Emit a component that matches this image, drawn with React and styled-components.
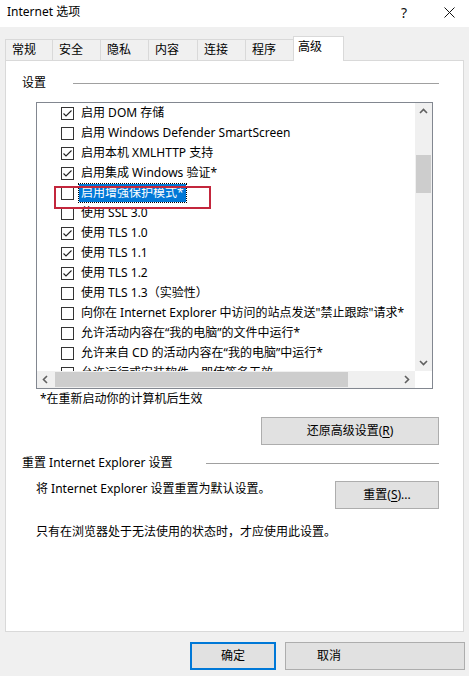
import React from 'react';
import styled, { createGlobalStyle } from 'styled-components';

const Global = createGlobalStyle`
  html, body { margin: 0; padding: 0; background: #f0f0f0; }
  body {
    font-family: "Noto Sans", "Noto Sans CJK SC", sans-serif;
    font-size: 12px;
    color: #000;
  }
  * { box-sizing: border-box; }
`;

const Window = styled.div`
  width: 469px;
  height: 676px;
  display: flex;
  flex-direction: column;
  background: #f0f0f0;
  overflow: hidden;
`;

const TitleBar = styled.div`
  height: 27px;
  background: #fff;
  display: flex;
  align-items: center;
  padding: 0 10px 3px 7px;
`;

const Title = styled.span`
  font-size: 12px;
  line-height: 16px;
`;

const TitleControls = styled.div`
  margin-left: auto;
  display: flex;
  align-items: center;
  gap: 25px;
`;

const TitleButton = styled.div`
  width: 20px;
  height: 20px;
  display: flex;
  align-items: center;
  justify-content: center;
  font-size: 14px;
  color: #111;
`;

const TabStrip = styled.div`
  height: 33px;
  display: flex;
  align-items: flex-end;
  padding-left: 5px;
  position: relative;
  z-index: 2;
`;

const Tab = styled.div`
  width: ${p => p.$w}px;
  height: ${p => (p.$active ? 25 : 21)}px;
  margin-left: ${p => (p.$first ? 0 : -1)}px;
  margin-bottom: ${p => (p.$active ? -1 : 0)}px;
  border: 1px solid #d9d9d9;
  border-bottom: none;
  background: ${p => (p.$active ? '#fff' : '#f0f0f0')};
  display: flex;
  align-items: center;
  padding-left: ${p => (p.$active ? 4 : 6)}px;
  padding-bottom: ${p => (p.$active ? 4 : 0)}px;
  font-size: 12px;
  line-height: 16px;
  position: relative;
  z-index: ${p => (p.$active ? 2 : 1)};
`;

const Panel = styled.div`
  margin: 0 5px;
  height: 572px;
  background: #fff;
  border: 1px solid #d9d9d9;
  display: flex;
  flex-direction: column;
  position: relative;
  z-index: 1;
`;

const GroupHeader = styled.div`
  display: flex;
  align-items: center;
  height: 16px;
  margin-top: ${p => p.$top}px;
  padding: 0 24px 0 16px;
`;

const GroupLabel = styled.span`
  font-size: 12px;
  line-height: 16px;
  white-space: nowrap;
`;

const GroupLine = styled.div`
  flex: 1;
  height: 1px;
  background: #a0a0a0;
  margin-left: ${p => p.$gap}px;
`;

const ListBox = styled.div`
  position: relative;
  margin: 11px 0 0 30px;
  width: 397px;
  height: 287px;
  border: 1px solid #828790;
  display: grid;
  grid-template-columns: 1fr 17px;
  grid-template-rows: 1fr 17px;
`;

const Rows = styled.div`
  overflow: hidden;
  padding-left: 24px;
  background: #fff;
`;

const Row = styled.div`
  height: 20px;
  display: flex;
  align-items: center;
  gap: ${p => (p.$selected ? 5 : 7)}px;
  white-space: nowrap;
`;

const RowLabel = styled.span`
  font-size: 12px;
  line-height: 16px;
  padding: ${p => (p.$selected ? '1px 2px' : '0')};
  background: ${p => (p.$selected ? '#0078d7' : 'transparent')};
  color: ${p => (p.$selected ? '#fff' : '#000')};
  outline: ${p => (p.$selected ? '1px dotted #000' : 'none')};
`;

const Box = styled.svg`
  flex: none;
  display: block;
`;

const Highlight = styled.div`
  position: absolute;
  left: 17px;
  top: 83px;
  width: 157px;
  height: 23px;
  border: 2px solid #c3263c;
  pointer-events: none;
`;

const VScroll = styled.div`
  background: #f0f0f0;
  display: flex;
  flex-direction: column;
`;

const HScroll = styled.div`
  background: #f0f0f0;
  display: flex;
`;

const Corner = styled.div`
  background: #fff;
`;

const ArrowBox = styled.div`
  width: 17px;
  height: 17px;
  flex: none;
  display: flex;
  align-items: center;
  justify-content: center;
`;

const VTrack = styled.div`
  flex: 1;
  position: relative;
`;

const VThumb = styled.div`
  position: absolute;
  left: 1px;
  right: 1px;
  top: 35px;
  height: 38px;
  background: #cdcdcd;
`;

const HTrack = styled.div`
  flex: 1;
  position: relative;
`;

const HThumb = styled.div`
  position: absolute;
  top: 1px;
  bottom: 1px;
  left: 1px;
  width: 293px;
  background: #cdcdcd;
`;

const Note = styled.div`
  margin: 2px 0 0 34px;
  font-size: 12px;
  line-height: 16px;
`;

const Button = styled.div`
  width: ${p => p.$w}px;
  height: 28px;
  background: #e1e1e1;
  border: ${p => (p.$default ? '2px solid #0078d7' : '1px solid #adadad')};
  display: flex;
  align-items: center;
  justify-content: ${p => (p.$left ? 'flex-start' : 'center')};
  padding-left: ${p => p.$pl || 0}px;
  font-size: 12px;
  line-height: 16px;
  flex: none;
`;

const RestoreWrap = styled.div`
  margin-top: 10px;
  align-self: flex-end;
  margin-right: 24px;
`;

const ResetRow = styled.div`
  margin-top: 10px;
  padding: 0 24px 0 30px;
  display: flex;
  justify-content: space-between;
  align-items: flex-start;
`;

const BodyText = styled.div`
  font-size: 12px;
  line-height: 16px;
  margin-top: ${p => p.$top || 0}px;
  padding-left: ${p => p.$pl || 0}px;
`;

const Footer = styled.div`
  display: flex;
  justify-content: flex-end;
  gap: 9px;
  padding: 10px 4px 0 0;
`;

const U = styled.span`
  text-decoration: underline;
  text-underline-offset: 2px;
`;

const Checkbox = ({ checked }) => (
  <Box width="13" height="13" viewBox="0 0 13 13">
    <rect x="0.5" y="0.5" width="12" height="12" fill="#fff" stroke="#333" />
    {checked && (
      <polyline points="2.5,6.5 5,9 10.5,3.5" fill="none" stroke="#222" strokeWidth="1.1" />
    )}
  </Box>
);

const Arrow = ({ dir }) => {
  const pts = {
    up: '5,10 8.5,6.5 12,10',
    down: '5,7 8.5,10.5 12,7',
    left: '10,5 6.5,8.5 10,12',
    right: '7,5 10.5,8.5 7,12',
  }[dir];
  return (
    <ArrowBox>
      <svg width="17" height="17" viewBox="0 0 17 17">
        <polyline points={pts} fill="none" stroke="#606060" strokeWidth="1.6" />
      </svg>
    </ArrowBox>
  );
};

const tabs = [
  { t: '常规', w: 48 },
  { t: '安全', w: 49 },
  { t: '隐私', w: 49 },
  { t: '内容', w: 50 },
  { t: '连接', w: 49 },
  { t: '程序', w: 49 },
  { t: '高级', w: 51, active: true },
];

const items = [
  { c: true, t: '启用 DOM 存储' },
  { c: false, t: '启用 Windows Defender SmartScreen' },
  { c: true, t: '启用本机 XMLHTTP 支持' },
  { c: true, t: '启用集成 Windows 验证*' },
  { c: false, t: '启用增强保护模式*', sel: true },
  { c: false, t: '使用 SSL 3.0' },
  { c: true, t: '使用 TLS 1.0' },
  { c: true, t: '使用 TLS 1.1' },
  { c: true, t: '使用 TLS 1.2' },
  { c: false, t: '使用 TLS 1.3（实验性）' },
  { c: false, t: '向你在 Internet Explorer 中访问的站点发送"禁止跟踪"请求*' },
  { c: false, t: '允许活动内容在“我的电脑”的文件中运行*' },
  { c: false, t: '允许来自 CD 的活动内容在“我的电脑”中运行*' },
  { c: false, t: '允许运行或安装软件，即使签名无效' },
];

export default function App() {
  return (
    <>
      <Global />
      <Window>
        <TitleBar>
          <Title>Internet 选项</Title>
          <TitleControls>
            <TitleButton>?</TitleButton>
            <TitleButton>
              <svg width="11" height="11" viewBox="0 0 11 11">
                <path d="M0.5 0.5 L10.5 10.5 M10.5 0.5 L0.5 10.5" stroke="#111" strokeWidth="1" />
              </svg>
            </TitleButton>
          </TitleControls>
        </TitleBar>
        <TabStrip>
          {tabs.map((tb, i) => (
            <Tab key={tb.t} $w={tb.w} $active={tb.active} $first={i === 0}>
              {tb.t}
            </Tab>
          ))}
        </TabStrip>
        <Panel>
          <GroupHeader $top={14}>
            <GroupLabel>设置</GroupLabel>
            <GroupLine $gap={27} />
          </GroupHeader>
          <ListBox>
            <Rows>
              {items.map(it => (
                <Row key={it.t} $selected={it.sel}>
                  <Checkbox checked={it.c} />
                  <RowLabel $selected={it.sel}>{it.t}</RowLabel>
                </Row>
              ))}
            </Rows>
            <VScroll>
              <Arrow dir="up" />
              <VTrack>
                <VThumb />
              </VTrack>
              <Arrow dir="down" />
            </VScroll>
            <HScroll>
              <Arrow dir="left" />
              <HTrack>
                <HThumb />
              </HTrack>
              <Arrow dir="right" />
            </HScroll>
            <Corner />
            <Highlight />
          </ListBox>
          <Note>*在重新启动你的计算机后生效</Note>
          <RestoreWrap>
            <Button $w={178}>
              还原高级设置(<U>R</U>)
            </Button>
          </RestoreWrap>
          <GroupHeader $top={10}>
            <GroupLabel>重置 Internet Explorer 设置</GroupLabel>
            <GroupLine $gap={33} />
          </GroupHeader>
          <ResetRow>
            <BodyText>将 Internet Explorer 设置重置为默认设置。</BodyText>
            <Button $w={104}>
              重置(<U>S</U>)...
            </Button>
          </ResetRow>
          <BodyText $top={15} $pl={30}>
            只有在浏览器处于无法使用的状态时，才应使用此设置。
          </BodyText>
        </Panel>
        <Footer>
          <Button $w={86} $default>确定</Button>
          <Button $w={180} $left $pl={31}>取消</Button>
        </Footer>
      </Window>
    </>
  );
}
